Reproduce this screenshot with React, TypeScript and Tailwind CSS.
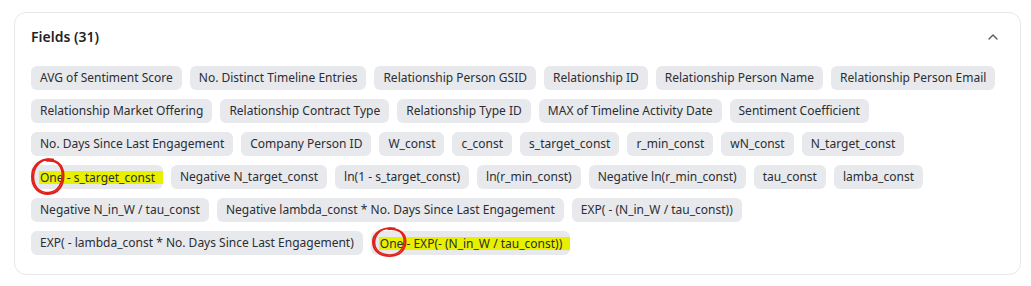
import { ChevronUp } from 'lucide-react';

const rows: string[][] = [
  ['AVG of Sentiment Score', 'No. Distinct Timeline Entries', 'Relationship Person GSID', 'Relationship ID', 'Relationship Person Name', 'Relationship Person Email'],
  ['Relationship Market Offering', 'Relationship Contract Type', 'Relationship Type ID', 'MAX of Timeline Activity Date', 'Sentiment Coefficient'],
  ['No. Days Since Last Engagement', 'Company Person ID', 'W_const', 'c_const', 's_target_const', 'r_min_const', 'wN_const', 'N_target_const'],
  ['One - s_target_const', 'Negative N_target_const', 'ln(1 - s_target_const)', 'ln(r_min_const)', 'Negative ln(r_min_const)', 'tau_const', 'lamba_const'],
  ['Negative N_in_W / tau_const', 'Negative lambda_const * No. Days Since Last Engagement', 'EXP( - (N_in_W / tau_const))'],
  ['EXP( - lambda_const * No. Days Since Last Engagement)', 'One - EXP(- (N_in_W / tau_const))'],
];

const fieldCount = rows.flat().length;

// hand-drawn red ring around "One"
function Scribble({ className }: { className: string }) {
  return (
    <svg className={`pointer-events-none absolute ${className}`} viewBox="0 0 34 36" fill="none" preserveAspectRatio="none">
      <path
        d="M22 1.5 C9 -0.5 1 8 1 18 C1 29 8 35 17 35 C27 35 33 27 32.5 16 C32 6 25 1 14 2"
        stroke="#e0201b"
        strokeWidth="2"
        strokeLinecap="round"
      />
      <path
        d="M18 1.2 C8 1.5 2.5 10 2.5 19 C3 29.5 10 34 18 33.5 C28 32.5 32 23 31 13 C29.5 5.5 24 2 16 3"
        stroke="#e0201b"
        strokeWidth="1.5"
        strokeLinecap="round"
      />
    </svg>
  );
}

function Chip({ label }: { label: string }) {
  if (label.startsWith('One - ')) {
    const first = label === 'One - s_target_const';
    return (
      <span className="relative inline-flex h-6 items-center rounded-md bg-[#e8e9ec] pl-2 text-[12px] text-[#2b2e33]">
        <span className="bg-[#e8f000] pl-px pr-2 leading-[13px]">{label}</span>
        {first ? (
          <Scribble className="left-0 top-[-7px] h-[37px] w-[34px]" />
        ) : (
          <Scribble className="left-px top-[-4px] h-[30px] w-[35px]" />
        )}
      </span>
    );
  }

  return (
    <span className="inline-flex h-6 items-center rounded-md bg-[#e8e9ec] px-[9px] text-[12px] text-[#2b2e33]">
      {label}
    </span>
  );
}

export default function App() {
  return (
    <div className="h-[286px] w-[1031px] bg-white pl-[14px] pr-[10px] pt-3 font-['Noto_Sans',sans-serif]">
      <div className="rounded-xl border border-[#e6e7ea] bg-white px-4 pb-[19px] pt-[14px]">
        {/* Header */}
        <div className="flex h-5 items-center justify-between">
          <h2 className="text-sm font-semibold text-[#1f2328]">Fields ({fieldCount})</h2>
          <ChevronUp className="mr-[3px] h-4 w-4 text-[#555a61]" strokeWidth={2} />
        </div>

        {/* Field chips */}
        <div className="mt-[19px] flex flex-col gap-[9px]">
          {rows.map((row, i) => (
            <div key={i} className="flex gap-2">
              {row.map((f) => (
                <Chip key={f} label={f} />
              ))}
            </div>
          ))}
        </div>
      </div>
    </div>
  );
}
